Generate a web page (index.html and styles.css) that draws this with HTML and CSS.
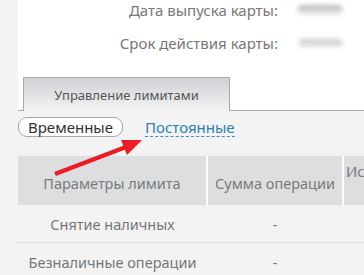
FILE: index.html
```html
<!DOCTYPE html>
<html lang="ru">
<head>
<meta charset="utf-8">
<link rel="stylesheet" href="styles.css">
</head>
<body>
<div class="main">
  <div class="info">
    <div class="info-row">
      <div class="info-label">Дата выпуска карты:</div>
      <div class="info-value"><span class="blur blur-1"></span></div>
    </div>
    <div class="info-row">
      <div class="info-label">Срок действия карты:</div>
      <div class="info-value"><span class="blur blur-2"></span></div>
    </div>
  </div>
  <div class="tabs">
    <div class="tab">Управление лимитами</div>
  </div>
  <div class="filters">
    <span class="pill">Временные</span>
    <a class="link">Постоянные</a>
  </div>
  <table class="limits">
    <thead>
      <tr>
        <th class="c1"><span class="th-text">Параметры лимита</span></th>
        <th class="c2"><span class="th-text">Сумма операции</span></th>
        <th class="c3"><span class="th-wrap">Использованная<br>сумма</span></th>
      </tr>
    </thead>
    <tbody>
      <tr>
        <td class="c1">Снятие наличных</td>
        <td class="c2">-</td>
        <td class="c3"></td>
      </tr>
      <tr>
        <td class="c1">Безналичные операции</td>
        <td class="c2">-</td>
        <td class="c3"></td>
      </tr>
    </tbody>
  </table>
</div>
<svg class="arrow" width="364" height="275" viewBox="0 0 364 275">
  <line x1="55" y1="174" x2="126" y2="147" stroke="#ec1c24" stroke-width="4.5" stroke-linecap="butt"/>
  <polygon points="142,140 121,140 127,155" fill="#ec1c24"/>
</svg>
</body>
</html>
```
FILE: styles.css
```css
html, body {
  margin: 0;
  padding: 0;
}
body {
  background: #f3f3f3;
  font-family: "Noto Sans", "Open Sans", sans-serif;
  width: 364px;
  height: 275px;
  overflow: hidden;
  position: relative;
}
.main {
  margin-left: 18px;
  width: 480px;
}
.info {
  background: #fff;
}
.info-row {
  display: grid;
  grid-template-columns: 260px 1fr;
  height: 33px;
  align-items: start;
}
.info-label {
  text-align: right;
  color: #777;
  font-size: 15px;
  line-height: 20px;
}
.info-value {
  position: relative;
  height: 20px;
}
.blur {
  position: absolute;
  display: block;
  border-radius: 6px;
  filter: blur(2px);
}
.blur-1 {
  left: 19px;
  top: 5px;
  width: 46px;
  height: 10px;
  background: linear-gradient(180deg, #b5b5b5 0%, #d6d6d6 50%, #eeeeee 100%);
}
.blur-2 {
  left: 21px;
  top: 6px;
  width: 44px;
  height: 9px;
  background: linear-gradient(180deg, #c4c4c4 0%, #dcdcdc 50%, #f0f0f0 100%);
}
.tabs {
  background: #fff;
  height: 45px;
  box-sizing: border-box;
  padding: 11px 0 0 5px;
  border-bottom: 1px solid #aaa;
}
.tab {
  width: 207px;
  height: 34px;
  box-sizing: border-box;
  border: 1px solid #aaa;
  border-bottom: none;
  background: linear-gradient(180deg, #ced1d5 0%, #e3e4e6 55%, #f3f3f3 100%);
  color: #555;
  font-size: 13px;
  line-height: 34px;
  text-align: center;
}
.filters {
  display: flex;
  align-items: center;
  gap: 22px;
  padding-top: 6px;
  height: 20px;
}
.pill {
  box-sizing: border-box;
  width: 105px;
  height: 20px;
  border: 1px solid #a8a8a8;
  border-radius: 9px;
  background: #fff;
  color: #333;
  font-size: 15px;
  line-height: 18px;
  text-align: center;
}
.link {
  color: #2f7fb5;
  font-size: 15px;
  line-height: 18px;
  border-bottom: 1px dashed #3a8cc3;
}
.limits {
  margin-top: 19px;
  border-collapse: collapse;
  table-layout: fixed;
  width: 480px;
}
.limits th {
  background: #dcdee0;
  color: #7a7a7a;
  font-weight: normal;
  font-size: 14.5px;
  line-height: 16px;
  height: 49px;
  padding: 0;
  text-align: center;
  vertical-align: middle;
}
.th-text {
  display: inline-block;
  padding-top: 4px;
}
.limits th + th {
  border-left: 2px solid #fff;
}
.limits td {
  color: #777;
  font-size: 14.5px;
  text-align: center;
  padding: 0;
  height: 37px;
}
.limits tbody tr + tr td {
  border-top: 1px solid #dcdcdc;
}
.c1 { width: 188px; }
.c2 { width: 134px; }
.c3 { width: 156px; }
.limits th.c3 {
  text-align: left;
  padding-left: 2px;
}
.th-wrap {
  display: inline-block;
  text-align: center;
  line-height: 20px;
  font-size: 15px;
}
.arrow {
  position: absolute;
  left: 0;
  top: 0;
  pointer-events: none;
}
```
